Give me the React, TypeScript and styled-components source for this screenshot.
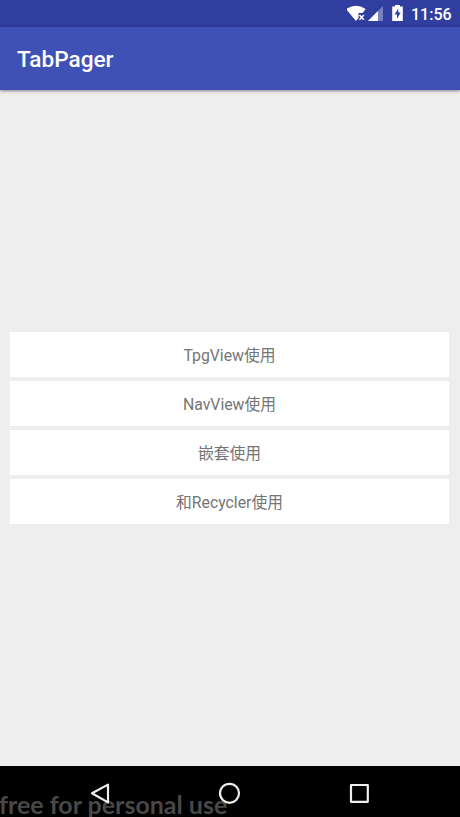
import React from 'react';
import styled, { createGlobalStyle } from 'styled-components';

const GlobalStyle = createGlobalStyle`
  body {
    margin: 0;
    background: #eee;
    font-family: Roboto, 'Noto Sans CJK SC', sans-serif;
  }
`;

const Screen = styled.div`
  display: flex;
  flex-direction: column;
  height: 817px;
  overflow: hidden;
  background: #eee;
`;

const StatusBar = styled.header`
  display: flex;
  flex: none;
  height: 27px;
  justify-content: flex-end;
  background: #303f9f;
  color: #fff;
`;

const StatusIcons = styled.svg`
  width: 64px;
  height: 27px;
`;

const Clock = styled.time`
  width: 49px;
  line-height: 29px;
  font-size: 16px;
  font-weight: 500;
  white-space: nowrap;
`;

const AppBar = styled.div`
  display: flex;
  flex: none;
  height: 63px;
  align-items: center;
  box-sizing: border-box;
  padding: 3px 17px 0;
  background: #3f51b5;
  box-shadow: 0 1px 3px rgba(0, 0, 0, 0.45);
  z-index: 1;
`;

const Title = styled.h1`
  margin: 0;
  color: #fff;
  font-size: 22.6px;
  font-weight: 500;
  line-height: 28px;
`;

const Content = styled.main`
  display: flex;
  flex: 1;
  flex-direction: column;
  justify-content: center;
  gap: 4px;
  padding: 0 11px 0 10px;
`;

const MenuButton = styled.button`
  box-sizing: border-box;
  height: 45px;
  padding: 2px 0 0;
  border: 0;
  background: #fff;
  color: #757575;
  font-family: inherit;
  font-size: 15.8px;
  line-height: 43px;
  text-align: center;
`;

const NavBar = styled.nav`
  position: relative;
  flex: none;
  height: 51px;
  overflow: hidden;
  background: #000;
`;

const Watermark = styled.span`
  position: absolute;
  left: -1px;
  top: 26px;
  color: #484848;
  font-family: Lato, sans-serif;
  font-size: 25px;
  font-weight: 700;
  line-height: 25px;
  white-space: nowrap;
`;

const NavIcons = styled.svg`
  position: relative;
  display: block;
  width: 460px;
  height: 51px;
`;

const items = ['TpgView使用', 'NavView使用', '嵌套使用', '和Recycler使用'];

export default function App() {
  return (
    <>
      <GlobalStyle />
      <Screen>
        <StatusBar>
          <StatusIcons viewBox="347 0 64 27" aria-hidden="true">
            <path d="M346 9.1Q356 2.2 365.7 9.1L362.5 13H358.5V18L356 21Z" fill="#fff" />
            <path d="M359.5 15l4.3 4.8M363.8 15l-4.3 4.8" stroke="#fff" strokeWidth="1.5" />
            <path d="M383 6V21H368Z" fill="#fff" opacity=".35" />
            <path d="M378 11V21H368Z" fill="#fff" />
            <path d="M395 5h5v1.6h2.8V21h-10.6V6.6H395Z" fill="#fff" />
            <path d="M398.3 8.5l-3.7 6h2.4v4.3l3.7-6.2h-2.4Z" fill="#303f9f" />
          </StatusIcons>
          <Clock>11:56</Clock>
        </StatusBar>
        <AppBar>
          <Title>TabPager</Title>
        </AppBar>
        <Content>
          {items.map((item) => (
            <MenuButton key={item}>{item}</MenuButton>
          ))}
        </Content>
        <NavBar>
          <Watermark>free for personal use</Watermark>
          <NavIcons viewBox="0 0 460 51" fill="none" stroke="#eee" strokeWidth="2.2" strokeLinejoin="round">
            <path d="M108 18.6V36.4L92 27.3Z" />
            <circle cx="229.5" cy="27.3" r="9.5" />
            <rect x="351" y="19" width="16.8" height="16.8" />
          </NavIcons>
        </NavBar>
      </Screen>
    </>
  );
}
